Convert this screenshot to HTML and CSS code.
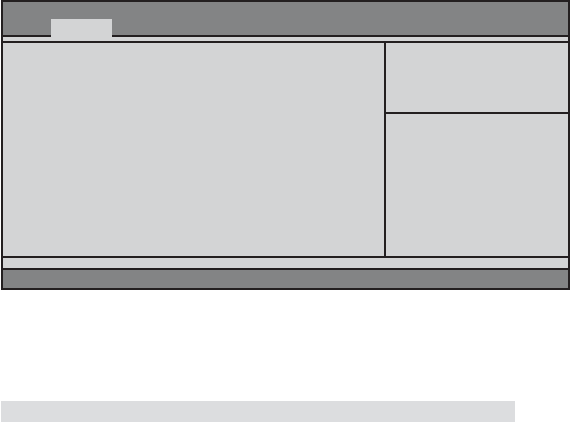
FILE: index.html
```html
<!DOCTYPE html>
<html>
<head>
<meta charset="utf-8">
<link rel="stylesheet" href="styles.css">
</head>
<body>
<div class="frame">
  <div class="header">
    <div class="tab"></div>
  </div>
  <div class="strip-top"></div>
  <div class="main">
    <div class="left"></div>
    <div class="right">
      <div class="help-top"></div>
      <div class="help-bottom"></div>
    </div>
  </div>
  <div class="strip-bottom"></div>
  <div class="footer"></div>
</div>
<div class="bar"></div>
</body>
</html>
```

FILE: styles.css
```css
html, body {
  margin: 0;
  padding: 0;
  background: #ffffff;
  font-family: "Liberation Sans", Arial, sans-serif;
}
body {
  width: 571px;
  height: 422px;
  overflow: hidden;
}
.frame {
  margin-left: 1px;
  width: 569px;
  box-sizing: border-box;
  border: 2px solid #231f20;
  display: flex;
  flex-direction: column;
}
.header {
  height: 33px;
  background: #838485;
  border-bottom: 2px solid #231f20;
  display: flex;
  align-items: flex-end;
  padding-left: 48px;
}
.tab {
  width: 61px;
  height: 18px;
  margin-bottom: -2px;
  background: #d3d4d5;
}
.strip-top {
  height: 4px;
  background: #d3d4d5;
  border-bottom: 2px solid #231f20;
}
.main {
  height: 213px;
  display: flex;
  background: #d3d4d5;
  border-bottom: 2px solid #231f20;
}
.left {
  width: 381px;
  border-right: 2px solid #231f20;
}
.right {
  flex: 1;
  display: flex;
  flex-direction: column;
}
.help-top {
  height: 69px;
  border-bottom: 2px solid #231f20;
}
.help-bottom {
  flex: 1;
}
.strip-bottom {
  height: 10px;
  background: #d3d4d5;
  border-bottom: 2px solid #231f20;
}
.footer {
  height: 18px;
  background: #838485;
}
.bar {
  margin-top: 111px;
  margin-left: 1px;
  width: 514px;
  height: 21px;
  background: #dcdddf;
}
```
